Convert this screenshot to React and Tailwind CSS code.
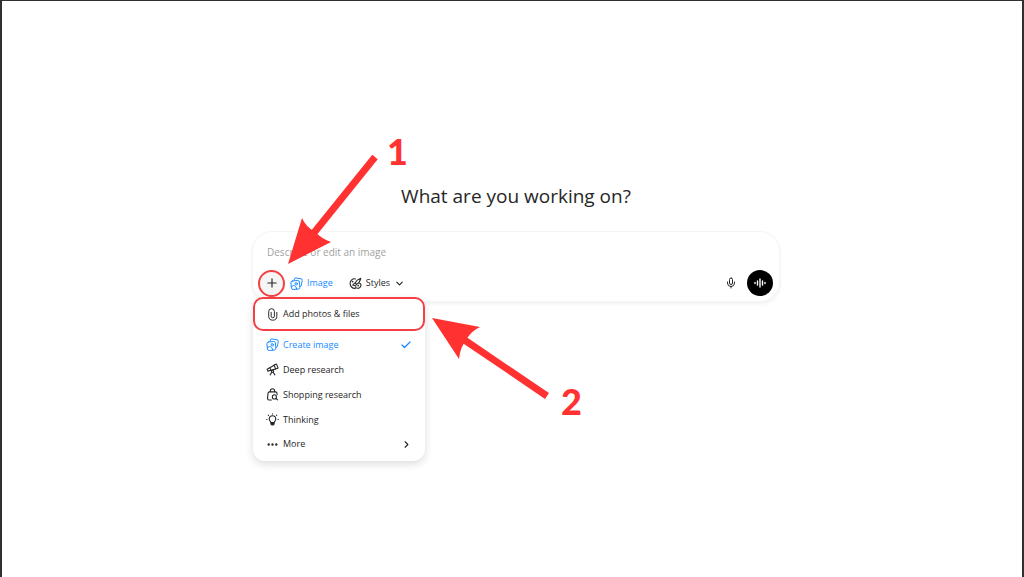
import React from "react";
import { Plus, Check, ChevronDown, ChevronRight, Ellipsis, Mic } from "lucide-react";

function ImagesIcon({ className }) {
  return (
    <svg viewBox="0 0 24 24" fill="none" stroke="currentColor" strokeWidth="1.8" strokeLinejoin="round" strokeLinecap="round" className={className}>
      <path d="M7.5 5.5 8 3.8A2.6 2.6 0 0 1 11 1.8l9.4 1.5a2.6 2.6 0 0 1 2.2 3L21 15.5a2.6 2.6 0 0 1-2.6 2.1" />
      <path d="m4.4 7.4 9.6-1a3 3 0 0 1 3.3 2.7l1 9.8a3 3 0 0 1-2.7 3.2l-9.6 1a3 3 0 0 1-3.3-2.7l-1-9.800a3 3 0 0 1 2.700-3.200Z" />
      <path d="M2.600 18.200c3.600-4.400 8.400-3.200 9.800 4" />
      <circle cx="11.5" cy="12.5" r="2.2" />
    </svg>
  );
}

function StylesIcon({ className }) {
  return (
    <svg viewBox="0 0 24 24" fill="none" stroke="currentColor" strokeWidth="2" strokeLinejoin="round" strokeLinecap="round" className={className}>
      <path d="M12 3.6C6.400 2.400 2 6.600 2 12c0 5.200 4.200 9 8.600 9 2.200 0 2.600-1.800 1.800-3.400" />
      <path d="M19 11c3 1.200 3.400 4 2.800 6-.8 2.800-4.600 4.600-7.400 3.400" />
      <path d="M21.800 2.200c-5 1.600-8.600 4.600-10.600 8.800l2.800 2.600c4.200-2.200 6.800-6 7.800-11.400Z" />
      <path d="M11.200 11c-2.400.2-2.600 2.600-4.400 4 2.600 1.200 6.200.8 7.200-1.400" />
      <path d="M6.500 8.600h.1M17 16h.1" strokeWidth="3" />
    </svg>
  );
}

function ClipIcon({ className }) {
  return (
    <svg viewBox="0 0 24 24" fill="none" stroke="currentColor" strokeWidth="1.8" strokeLinecap="round" className={className}>
      <path d="M20 8v7a7.500 7.500 0 0 1-15 0V6.500a5 5 0 0 1 10.500 0V15a3 3 0 0 1-6 0V8" />
    </svg>
  );
}

function TelescopeIcon({ className }) {
  return (
    <svg viewBox="0 0 24 24" fill="none" stroke="currentColor" strokeWidth="2" strokeLinejoin="round" strokeLinecap="round" className={className}>
      <path d="m15 3.800 4.400-1.800 3 7.400-4.600 1.900-2.800-7.500Z" />
      <path d="M15 4.200 7 8.600l2 5 8.600-2.700" />
      <path d="M7 8.800 2 11.400l1.400 3.600L9 13.400" />
      <circle cx="12" cy="15" r="2.200" />
      <path d="M10.800 17 7.600 22M13.200 17l3.200 5" />
    </svg>
  );
}

function ShoppingIcon({ className }) {
  return (
    <svg viewBox="0 0 24 24" fill="none" stroke="currentColor" strokeWidth="2" strokeLinejoin="round" strokeLinecap="round" className={className}>
      <path d="M10 22H5.400A2.600 2.600 0 0 1 2.800 19.200l1-9.700A2.600 2.600 0 0 1 6.400 7.200h11.200a2.600 2.600 0 0 1 2.600 2.300l.3 2.500" />
      <path d="M8 7V5.500a4 4 0 0 1 8 0V7" />
      <circle cx="15.500" cy="16.400" r="3.800" />
      <path d="m18.500 19.400 3 2.600" />
    </svg>
  );
}

function BulbIcon({ className }) {
  return (
    <svg viewBox="0 0 24 24" fill="none" stroke="currentColor" strokeWidth="2" strokeLinejoin="round" strokeLinecap="round" className={className}>
      <path d="M9 17.400c0-1.800-3-2.800-3-6.200a6 6 0 0 1 12 0c0 3.400-3 4.400-3 6.200Z" />
      <path d="M9 18v2a2 2 0 0 0 2 2h2a2 2 0 0 0 2-2v-2Z" fill="currentColor" />
      <path d="M12 1.500v.4M4.200 4l.4.4M19.800 4l-.4.4M1.200 12h.6M22.200 12h.6" />
    </svg>
  );
}

const menuItems = [
  { label: "Deep research", icon: TelescopeIcon },
  { label: "Shopping research", icon: ShoppingIcon },
  { label: "Thinking", icon: BulbIcon },
];

function ToolsMenu() {
  return (
    <div className="absolute top-[65px] left-0 w-[172px] rounded-xl bg-white pb-1 text-[9px] font-medium text-neutral-800 shadow-[0_3px_8px_rgba(0,0,0,0.14)]">
      <button
        type="button"
        className="flex h-[34px] w-full items-center gap-1 rounded-[10px] border-2 border-[#f43f44] pl-[11px]"
      >
        <ClipIcon className="size-[13px]" />
        Add photos &amp; files
      </button>
      <div className="pt-px pb-px">
        <button type="button" className="flex h-[25px] w-full items-center gap-1 px-[13px] text-[#168bff]">
          <ImagesIcon className="size-[13px]" />
          Create image
          <Check className="ml-auto size-3" strokeWidth={2.5} />
        </button>
        {menuItems.map(({ label, icon: Icon }) => (
          <button key={label} type="button" className="flex h-[25px] w-full items-center gap-1 px-[13px]">
            <Icon className="size-[13px]" />
            {label}
          </button>
        ))}
        <button type="button" className="flex h-6 w-full items-center gap-1 px-[13px]">
          <Ellipsis className="size-[13px]" strokeWidth={2.5} />
          More
          <ChevronRight className="ml-auto size-[11px]" strokeWidth={2.5} />
        </button>
      </div>
    </div>
  );
}

// Numbered arrows that sit on top of the composer
function Callouts() {
  return (
    <div className="pointer-events-none absolute top-0 left-0 font-[Lato,sans-serif] text-4xl leading-none font-black text-[#ff3131]">
      <svg width="300" height="170" viewBox="0 0 300 170" fill="currentColor" className="overflow-visible">
        <path d="M122-75 60 2" stroke="currentColor" strokeWidth="7" />
        <path d="M35 32 49-14Q53-5 61-1 69 7 78 10Z" />
        <path d="M294 164 210 107" stroke="currentColor" strokeWidth="7" />
        <path d="M179 86 227 95Q219 99 215 105 207 115 206 127Z" />
      </svg>
      <span className="absolute -top-[99px] left-[134px]">1</span>
      <span className="absolute top-[151px] left-[308px]">2</span>
    </div>
  );
}

function Composer() {
  return (
    <form
      className="relative mt-5 rounded-[20px] border border-neutral-100 bg-white px-1 pt-[9px] pb-1 shadow-[0_2px_4px_rgba(0,0,0,0.06)]"
      onSubmit={(e) => e.preventDefault()}
    >
      <input
        type="text"
        aria-label="Describe or edit an image"
        placeholder="Describe or edit an image"
        className="block h-[22px] w-full px-2.5 text-[10px] outline-none placeholder:text-neutral-400"
      />
      <div className="mt-1.5 flex h-7 items-center px-px text-[9px] font-medium text-neutral-800">
        <button
          type="button"
          aria-label="Add"
          className="flex size-[27px] items-center justify-center rounded-full border-2 border-[#f43f44] bg-neutral-100"
        >
          <Plus className="size-3.5" strokeWidth={2} />
        </button>
        <button type="button" className="ml-[5px] flex items-center gap-1 text-[#168bff]">
          <ImagesIcon className="size-[13px]" />
          Image
        </button>
        <button type="button" className="ml-4 flex items-center gap-1">
          <StylesIcon className="size-[13px]" />
          Styles
          <ChevronDown className="size-[11px]" strokeWidth={2.5} />
        </button>
        <button type="button" aria-label="Dictate" className="ml-auto">
          <Mic className="size-3" strokeWidth={2} />
        </button>
        <button
          type="button"
          aria-label="Voice mode"
          className="mr-px ml-2.5 flex size-[26px] items-center justify-center rounded-full bg-black text-white"
        >
          <svg viewBox="0 0 12 12" stroke="currentColor" strokeWidth="1.4" strokeLinecap="round" className="size-3">
            <path d="M1 5.500v1M3.500 4v4M6 2v8M8.500 4v4M11 5.500v1" />
          </svg>
        </button>
      </div>
      <ToolsMenu />
      <Callouts />
    </form>
  );
}

export default function App() {
  return (
    <main className="min-h-screen border-x-2 border-t border-[#303033] bg-white pt-[180px] pl-2 font-['Open_Sans','Noto_Sans',sans-serif]">
      <div className="mx-auto w-full max-w-[528px]">
        <h1 className="text-center text-[19px] leading-[30px] text-neutral-800">What are you working on?</h1>
        <Composer />
      </div>
    </main>
  );
}
